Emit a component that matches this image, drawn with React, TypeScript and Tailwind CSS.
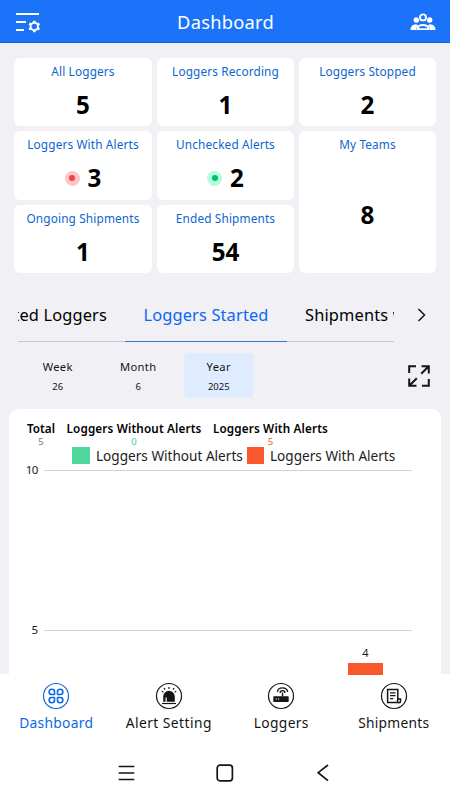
import { clsx } from 'clsx';

interface StatCardProps {
  label: string;
  value: string;
  dot?: 'red' | 'green';
  tall?: boolean;
}

const StatCard = ({ label, value, dot, tall }: StatCardProps): React.JSX.Element => (
  <div
    className={clsx(
      'flex flex-col items-center rounded-[6px] bg-white pt-[4px]',
      tall && 'row-span-2',
    )}
  >
    <span className="whitespace-nowrap text-[11.8px] leading-[18px] tracking-[0.15px] text-[#0b66d0]">
      {label}
    </span>
    <div className={clsx('flex items-center gap-2', tall ? 'mt-[46px]' : 'mt-[9px]')}>
      {dot && (
        <span
          className={clsx(
            'flex h-[15px] w-[15px] items-center justify-center rounded-full',
            dot === 'red' ? 'bg-[#ffc5c6]' : 'bg-[#b0fedb]',
          )}
        >
          <span
            className={clsx('h-[6px] w-[6px] rounded-full', dot === 'red' ? 'bg-[#ee4243]' : 'bg-[#08bc68]')}
          />
        </span>
      )}
      <span className="text-[24.2px] font-bold leading-[32px] text-black">{value}</span>
    </div>
  </div>
);

const FilterIcon = (): React.JSX.Element => (
  <svg width="26" height="22" viewBox="0 0 26 22" fill="none" stroke="white" strokeWidth="2">
    <path d="M1 3h23M1 11h10M1 19h8" />
    <circle cx="19.3" cy="15.5" r="3.7" strokeWidth="1.9" />
    <path
      d="M19.3 9.8v2M19.3 19.2v2M14.2 12.7l1.7 1M22.7 17.3l1.7 1M14.2 18.3l1.7-1M22.7 13.7l1.7-1"
      strokeWidth="2.6"
    />
  </svg>
);

const TeamIcon = (): React.JSX.Element => (
  <svg width="26" height="18" viewBox="0 0 26 18" fill="none">
    <circle cx="6.4" cy="7" r="2.8" fill="white" />
    <circle cx="19.6" cy="7" r="2.8" fill="white" />
    <path d="M.5 17c0-3.3 2-5.5 5.5-5.8L9 12.5 6 17zM25.5 17c0-3.3-2-5.5-5.5-5.8L17 12.5 20 17z" fill="white" />
    <circle cx="13" cy="4.4" r="4.6" fill="#1a73f8" />
    <circle cx="13" cy="4.4" r="3" stroke="white" strokeWidth="1.9" />
    <path d="M6 18c0-4.500 2.600-7.300 7-7.300s7 2.800 7 7.300z" fill="#1a73f8" />
    <path d="M7.300 16.200c.5-2.800 2.600-4.200 5.700-4.200s5.200 1.400 5.700 4.200z" stroke="white" strokeWidth="1.800" />
  </svg>
);

const ExpandIcon = (): React.JSX.Element => (
  <svg width="24" height="24" viewBox="0 0 24 24" fill="none" stroke="#151515" strokeWidth="2">
    <path d="M2.2 9V2.2H9M21.800 15v6.800H15M14.500 2.200h7.300v7.300M21.500 2.500l-7.300 7.300M9.500 21.800H2.200v-7.300M2.500 21.500l7.300-7.300" />
  </svg>
);

const GridIcon = (): React.JSX.Element => (
  <g strokeWidth="1.6" strokeLinejoin="round">
    <path d="M12.500 12.500H9.700a2.500 2.500 0 0 1-2.500-2.500v-.300a2.500 2.500 0 0 1 2.500-2.500h.3a2.500 2.500 0 0 1 2.500 2.500z" />
    <path d="M15.500 12.500h2.800a2.500 2.500 0 0 0 2.500-2.500v-.300a2.500 2.500 0 0 0-2.500-2.500H18a2.500 2.500 0 0 0-2.500 2.500z" />
    <path d="M12.500 15.500H9.700A2.500 2.500 0 0 0 7.200 18v.300a2.500 2.500 0 0 0 2.500 2.500h.3a2.500 2.500 0 0 0 2.500-2.500z" />
    <path d="M15.500 15.500h2.800a2.500 2.500 0 0 1 2.500 2.500v.300a2.500 2.500 0 0 1-2.500 2.500H18a2.500 2.500 0 0 1-2.500-2.500z" />
  </g>
);

const AlarmIcon = (): React.JSX.Element => (
  <g>
    <path
      d="M8.200 19.700v-5.200a5.800 5.800 0 0 1 11.600 0v5.200h-8.100v-4.200h-1.200v4.200z"
      fill="currentColor"
      stroke="none"
    />
    <path d="M7 21.500h14" strokeWidth="1.200" />
    <path d="M14 4.900v2M9 6l1 1.600M19 6l-1 1.600M6.800 9.300l1.600.9M21.200 9.300l-1.600.9" strokeWidth="1.200" />
  </g>
);

const RouterIcon = (): React.JSX.Element => (
  <g>
    <rect x="6.300" y="14.300" width="15.400" height="5.700" rx=".8" fill="currentColor" stroke="none" />
    <path d="M15.500 14.500v-4M13.100 10.900c0-3 4.800-3 4.800 0M10.400 9.900c.5-5.400 9.700-5.400 10.200 0" strokeWidth="1.400" />
    <path d="M8.600 17h1.200M11 17h1.200" stroke="white" strokeWidth="1.200" />
  </g>
);

const DocumentIcon = (): React.JSX.Element => (
  <g strokeWidth="1.500">
    <path d="M17.800 17V7.500H7.600v13h11M17.800 17h2.700v2.300a1.500 1.500 0 0 1-3 0z" />
    <path d="M10 10.800h5.600M10 13.700h5.600M10 16.600h3.200" strokeWidth="1.200" />
  </g>
);

const NAV_ITEMS = [
  { label: 'Dashboard', icon: <GridIcon />, active: true, labelClass: 'tracking-[0.3px]' },
  { label: 'Alert Setting', icon: <AlarmIcon />, active: false, labelClass: 'tracking-[0.45px]' },
  { label: 'Loggers', icon: <RouterIcon />, active: false, labelClass: 'tracking-[0.35px]' },
  { label: 'Shipments', icon: <DocumentIcon />, active: false, labelClass: 'tracking-[0.25px]' },
];

const PERIODS = [
  { label: 'Week', value: '26', active: false },
  { label: 'Month', value: '6', active: false },
  { label: 'Year', value: '2025', active: true },
];

const Header = (): React.JSX.Element => (
  <header className="flex h-[43px] items-center justify-between border-b border-[#0867e8] bg-[#1a73f8] pl-[15px] pr-[14px] pt-[2px]">
    <FilterIcon />
    <h1 className="text-[18.3px] leading-6 tracking-[0.25px] text-white">Dashboard</h1>
    <TeamIcon />
  </header>
);

const Tabs = (): React.JSX.Element => (
  <div className="mt-[18px] flex h-[51px] pl-[18px]">
    <div className="flex w-[376px] shrink-0 overflow-hidden whitespace-nowrap text-[16.4px] leading-[48px] tracking-[0.15px]">
      <div className="flex w-[107px] shrink-0 justify-end border-b border-[#c6c6d0] pr-[18px] text-black">
        Connected Loggers
      </div>
      <div className="flex w-[162px] shrink-0 justify-center border-b border-[#3478dd] text-[#0b68f3]">
        Loggers Started
      </div>
      <div className="w-[107px] shrink-0 border-b border-[#c6c6d0] pl-[18px] text-black">
        Shipments with Alerts
      </div>
    </div>
    <svg className="ml-[23px] mt-[16px]" width="10" height="16" viewBox="0 0 10 16" fill="none" stroke="#151515" strokeWidth="1.5">
      <path d="M1.5 2l6 6-6 6" />
    </svg>
  </div>
);

const Periods = (): React.JSX.Element => (
  <div className="mt-[11px] flex h-[45px] items-center pl-[23px] pr-[19px]">
    {PERIODS.map((period) => (
      <div
        key={period.label}
        className={clsx(
          'mr-[11px] flex h-full w-[69.5px] flex-col items-center rounded-[5px] pt-[6px]',
          period.active && 'bg-[#dfecff]',
        )}
      >
        <span className="text-[11.2px] leading-[16px] tracking-[0.35px] text-[#151515]">{period.label}</span>
        <span className="mt-[5px] text-[9.5px] leading-[14px] text-[#151515]">{period.value}</span>
      </div>
    ))}
    <div className="ml-auto">
      <ExpandIcon />
    </div>
  </div>
);

const ChartCard = (): React.JSX.Element => (
  <section className="mx-[9px] mt-[11px] h-[266px] overflow-hidden rounded-t-[9px] bg-white">
    <div className="flex gap-[12px] whitespace-nowrap pl-[18px] pt-[11px] text-[11.7px] font-semibold leading-[16px] text-black">
      <div className="flex w-[28px] flex-col items-center">
        Total
        <span className="pt-px text-[9.5px] font-normal leading-[10px] text-[#777]">5</span>
      </div>
      <div className="flex w-[134px] flex-col items-center tracking-[0.15px]">
        Loggers Without Alerts
        <span className="pt-px text-[9.5px] font-normal leading-[10px] text-[#42cf96]">0</span>
      </div>
      <div className="flex w-[115px] flex-col items-center tracking-[0.15px]">
        Loggers With Alerts
        <span className="pt-px text-[9.5px] font-normal leading-[10px] text-[#ed5a35]">5</span>
      </div>
    </div>
    <div className="flex h-[17px] items-center whitespace-nowrap pl-[63px] text-[13.6px] leading-[17px] text-[#1c1c1c]">
      <span className="mr-[6px] h-[17px] w-[18px] bg-[#50d89c]" />
      <span className="w-[151px]">Loggers Without Alerts</span>
      <span className="mr-[6px] h-[17px] w-[17px] bg-[#f9582d]" />
      <span>Loggers With Alerts</span>
    </div>
    <div className="-mt-px flex h-[14px] items-center pr-[29px] text-[11.5px] leading-[14px] text-[#1c1c1c]">
      <span className="mr-[6px] w-[29px] text-right tracking-[-0.4px]">10</span>
      <span className="h-px grow bg-[#d2d2d2]" />
    </div>
    <div className="mt-[146px] flex h-[14px] items-center pr-[29px] text-[11.5px] leading-[14px] text-[#1c1c1c]">
      <span className="mr-[6px] w-[29px] text-right">5</span>
      <span className="h-px grow bg-[#d2d2d2]" />
    </div>
    <div className="ml-[339px] mt-[9px] flex w-[35px] flex-col items-center text-[11px] leading-[14px] text-[#1c1c1c]">
      4
      <span className="mt-[3px] h-[40px] w-full bg-[#f9582d]" />
    </div>
  </section>
);

const BottomNav = (): React.JSX.Element => (
  <nav className="flex h-[66px] bg-white pt-[8px]">
    {NAV_ITEMS.map((item) => (
      <div
        key={item.label}
        className={clsx('flex w-[112.5px] flex-col items-center', item.active ? 'text-[#0b68e8]' : 'text-[#151515]')}
      >
        <svg width="28" height="28" viewBox="0 0 28 28" fill="none" stroke="currentColor">
          <circle cx="14" cy="14" r="12.5" strokeWidth="1.2" />
          {item.icon}
        </svg>
        <span className={clsx('mt-[3px] whitespace-nowrap text-[13.8px] leading-[20px]', item.labelClass)}>
          {item.label}
        </span>
      </div>
    ))}
  </nav>
);

const SystemBar = (): React.JSX.Element => (
  <footer className="flex h-[60px] items-center justify-center gap-[80px] bg-white pt-[6px]">
    <svg width="18" height="18" viewBox="0 0 18 18" fill="none" stroke="#151515" strokeWidth="1.7">
      <path d="M.7 2.5h15.600M.7 9h15.600M.7 15.500h15.600" />
    </svg>
    <svg width="18" height="18" viewBox="0 0 18 18" fill="none" stroke="#151515" strokeWidth="1.7">
      <rect x="1.2" y="1.2" width="15.2" height="15.6" rx="2.8" />
    </svg>
    <svg width="18" height="18" viewBox="0 0 18 18" fill="none" stroke="#151515" strokeWidth="1.7">
      <path d="M14 1L4.200 8.700l9.800 8" />
    </svg>
  </footer>
);

const App = (): React.JSX.Element => (
  <div className="h-[800px] w-[450px] overflow-hidden bg-[#f1f0f5] font-['Noto_Sans',sans-serif]">
    <Header />
    <main className="h-[631px]">
      <div className="grid grid-cols-[138px_137px_137px] grid-rows-[68.5px_68.5px_68.5px] gap-[5px] px-[14px] pt-[14.5px]">
        <StatCard label="All Loggers" value="5" />
        <StatCard label="Loggers Recording" value="1" />
        <StatCard label="Loggers Stopped" value="2" />
        <StatCard label="Loggers With Alerts" value="3" dot="red" />
        <StatCard label="Unchecked Alerts" value="2" dot="green" />
        <StatCard label="My Teams" value="8" tall />
        <StatCard label="Ongoing Shipments" value="1" />
        <StatCard label="Ended Shipments" value="54" />
      </div>
      <Tabs />
      <Periods />
      <ChartCard />
    </main>
    <BottomNav />
    <SystemBar />
  </div>
);

export default App;
